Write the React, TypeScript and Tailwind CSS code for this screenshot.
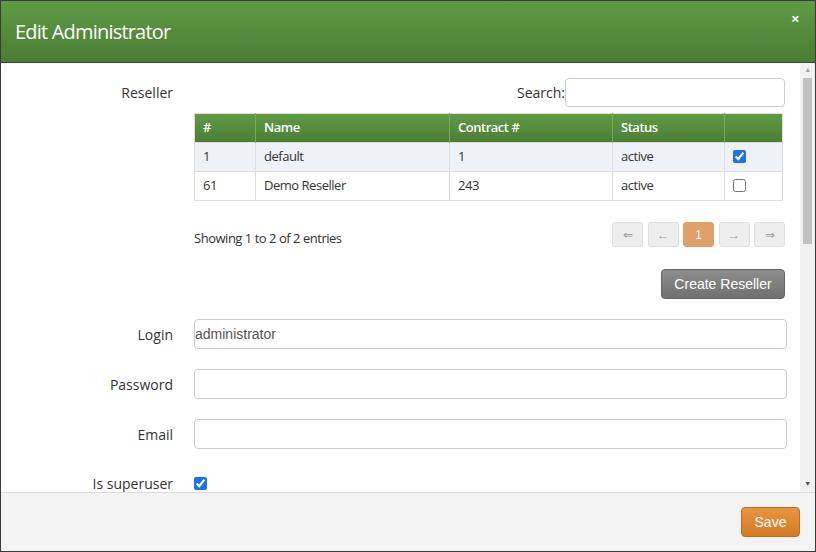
import React from "react";

const rows = [
  { id: "1", name: "default", contract: "1", status: "active", checked: true },
  { id: "61", name: "Demo Reseller", contract: "243", status: "active", checked: false },
];

const pages = ["⇐", "←", "1", "→", "⇒"];

function Field({ label, value }: { label: string; value?: string }) {
  return (
    <div className="flex items-center h-[30px] mb-[20px]">
      <label className="w-[172px] text-right text-[14px] tracking-normal text-[#333]">{label}</label>
      <div className="ml-[21px] w-[593px] h-[30px] border border-[#ccc] rounded-[4px] bg-white flex items-center text-[14px] tracking-normal text-[#555] font-['Liberation_Sans',_sans-serif]">
        {value}
      </div>
    </div>
  );
}

export default function App() {
  return (
    <div className="w-[816px] h-[552px] bg-[#555] overflow-hidden font-['Open_Sans',_'Liberation_Sans',_sans-serif] tracking-[-0.03em]">
      <div className="w-full h-full bg-white border border-[#3a3a3a] flex flex-col">
        <div className="h-[62px] shrink-0 bg-gradient-to-b from-[#5f9b44] to-[#4a7d34] border-b border-[#2f4f22] flex items-center px-[14px] relative">
          <h1 className="text-white text-[20px] font-medium tracking-[-0.04em]">Edit Administrator</h1>
          <span className="absolute right-[16px] top-[6px] text-white font-bold text-[15px]">×</span>
        </div>
        <div className="flex flex-1 min-h-0">
          <div className="flex-1 pt-[14px] overflow-hidden">
            <div className="flex">
              <div className="w-[172px] text-right text-[14px] tracking-normal text-[#333] pt-[5px]">Reseller</div>
              <div className="ml-[21px] w-[591px]">
                <div className="flex justify-end items-center h-[30px] mb-[6px]">
                  <span className="text-[14px] tracking-normal text-[#333]">Search:</span>
                  <div className="w-[220px] h-[29px] border border-[#ccc] rounded-[4px] bg-white"></div>
                </div>
                <table className="w-[589px] border-collapse text-[13px] text-[#333] border border-[#ddd]">
                  <thead>
                    <tr className="h-[29px] bg-gradient-to-b from-[#5f9b44] to-[#4a7d34] text-white text-left">
                      <th className="w-[61px] pl-[8px] font-semibold border-r border-[#7aa863]">#</th>
                      <th className="w-[194px] pl-[8px] font-semibold border-r border-[#7aa863]">Name</th>
                      <th className="w-[163px] pl-[8px] font-semibold border-r border-[#7aa863]">Contract #</th>
                      <th className="w-[112px] pl-[8px] font-semibold border-r border-[#7aa863]">Status</th>
                      <th></th>
                    </tr>
                  </thead>
                  <tbody>
                    {rows.map((r, i) => (
                      <tr key={r.id} className={`h-[29px] border-t border-[#ddd] ${i === 0 ? "bg-[#eef1f6]" : "bg-white"}`}>
                        <td className="pl-[8px] border-r border-[#ddd]">{r.id}</td>
                        <td className="pl-[8px] border-r border-[#ddd]">{r.name}</td>
                        <td className="pl-[8px] border-r border-[#ddd]">{r.contract}</td>
                        <td className="pl-[8px] border-r border-[#ddd]">{r.status}</td>
                        <td className="pl-[8px] pt-[3px]">
                          <input type="checkbox" readOnly checked={r.checked} className="w-[13px] h-[13px] accent-[#1a73e8]" />
                        </td>
                      </tr>
                    ))}
                  </tbody>
                </table>
                <div className="flex justify-between items-end h-[25px] mt-[21px]">
                  <span className="text-[13px] leading-[18px] text-[#333]">Showing 1 to 2 of 2 entries</span>
                  <div className="flex gap-[4.5px]">
                    {pages.map((p) => (
                      <div
                        key={p}
                        className={`w-[31px] h-[25px] rounded-[3px] border flex items-center justify-center text-[12px] tracking-normal font-['Liberation_Sans',_sans-serif] ${p === "1" ? "bg-[#dfa06a] border-[#dfa06a] text-white" : "bg-[#eee] border-[#ddd] text-[#999]"}`}
                      >
                        {p}
                      </div>
                    ))}
                  </div>
                </div>
                <div className="flex justify-end mt-[22px]">
                  <button className="w-[124px] h-[30px] rounded-[4px] bg-gradient-to-b from-[#8e8e8e] to-[#707070] border border-[#666] text-white text-[14px] tracking-normal font-['Liberation_Sans',_sans-serif]">
                    Create Reseller
                  </button>
                </div>
              </div>
            </div>
            <div className="mt-[20px]">
              <Field label="Login" value="administrator" />
              <Field label="Password" />
              <Field label="Email" />
              <div className="flex items-center h-[20px] mt-[24px]">
                <label className="w-[172px] text-right text-[14px] tracking-normal text-[#333]">Is superuser</label>
                <input type="checkbox" readOnly checked className="ml-[21px] w-[13px] h-[13px] accent-[#1a73e8]" />
              </div>
            </div>
          </div>
          <div className="w-[15px] shrink-0 bg-[#f1f1f1] flex flex-col items-center">
            <div className="h-[15px] flex items-center justify-center text-[7px] text-[#a3a3a3]">▲</div>
            <div className="w-[9px] h-[166px] bg-[#c1c1c1]"></div>
            <div className="flex-1"></div>
            <div className="h-[15px] flex items-center justify-center text-[7px] text-[#505050]">▼</div>
          </div>
        </div>
        <div className="h-[59px] shrink-0 bg-[#f3f3f3] border-t border-[#ddd] flex items-center justify-end pr-[15px]">
          <button className="w-[59px] h-[30px] rounded-[4px] bg-gradient-to-b from-[#e9953f] to-[#d47a22] border border-[#c06d1c] text-white text-[14px] tracking-normal font-['Liberation_Sans',_sans-serif]">
            Save
          </button>
        </div>
      </div>
    </div>
  );
}
